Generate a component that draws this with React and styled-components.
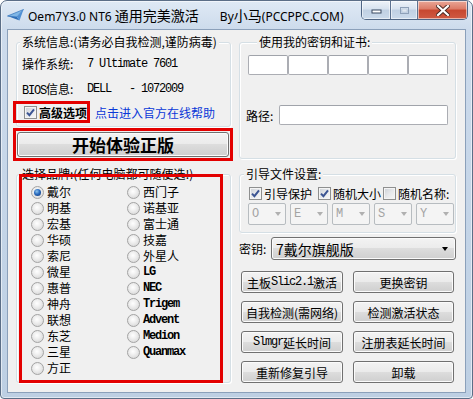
import React from 'react';
import styled, { createGlobalStyle } from 'styled-components';

const GlobalStyle = createGlobalStyle`
  html, body { margin: 0; padding: 0; background: #fff; }
  body {
    font-family: "Noto Sans CJK SC", "Noto Sans", sans-serif;
    font-size: 12px;
    color: #000;
  }
`;

const RED = '#e30000';

const Window = styled.div`
  width: 473px;
  height: 399px;
  box-sizing: border-box;
  display: flex;
  flex-direction: column;
  border: 1px solid #5b6e87;
  border-radius: 7px 7px 4px 4px;
  background: linear-gradient(to bottom, #dfe9f5 0px, #cddbec 28px, #c3d4e7 60%, #bdcfe3 100%);
  box-shadow: inset 0 0 0 1px rgba(255, 255, 255, 0.55);
  overflow: hidden;
`;

const TitleBar = styled.div`
  height: 28px;
  flex: none;
  display: flex;
  align-items: center;
  padding-left: 6px;
  padding-right: 4px;
`;

const Title = styled.div`
  margin-left: 4px;
  font-family: "Noto Sans", "Noto Sans CJK SC", sans-serif;
  font-size: 12px;
  white-space: pre;
  color: #000;
`;

const TitleCjk = styled.span`
  font-family: "Noto Sans CJK SC", sans-serif;
  font-size: 14px;
`;

const TitleBy = styled.span`
  margin-left: 21px;
`;

const CaptionGroup = styled.div`
  margin-left: auto;
  align-self: flex-start;
  display: flex;
  height: 18px;
  border: 1px solid #4f6584;
  border-top: none;
  border-radius: 0 0 5px 5px;
  overflow: hidden;
`;

const CaptionBtn = styled.div`
  width: ${p => p.$w}px;
  height: 100%;
  display: flex;
  align-items: center;
  justify-content: center;
  box-shadow: inset 0 0 0 1px rgba(255, 255, 255, 0.55);
  border-left: ${p => (p.$first ? 'none' : '1px solid #5d7290')};
  background: ${p =>
    p.$close
      ? 'linear-gradient(to bottom, #e9a797 0%, #dc7a66 45%, #c7472f 50%, #cf5a43 100%)'
      : 'linear-gradient(to bottom, #eef3f9 0%, #d7e2ef 45%, #c0d0e3 50%, #cbdaeb 100%)'};
`;

const Client = styled.div`
  margin: 0 6px 5px 6px;
  height: 364px;
  box-sizing: border-box;
  border: 1px solid #8ba0ba;
  background: #f0f0f0;
  display: flex;
`;

const LeftCol = styled.div`
  width: 230px;
  flex: none;
  box-sizing: border-box;
  padding-left: 8px;
`;

const RightCol = styled.div`
  flex: 1;
  padding-left: 1px;
`;

const GroupBox = styled.div`
  position: relative;
  box-sizing: border-box;
  width: ${p => p.$w}px;
  height: ${p => p.$h}px;
  margin-top: ${p => p.$mt}px;
  border: 1px solid #d5dfe5;
  border-radius: 3px;
  box-shadow: inset 1px 1px 0 #fff, 1px 1px 0 #fff;
  padding: ${p => p.$pad || '0'};
`;

const Legend = styled.span`
  position: absolute;
  top: -9px;
  left: ${p => p.$x}px;
  padding: 0 2px;
  line-height: 16px;
  background: #f0f0f0;
  white-space: nowrap;
`;

const InfoRow = styled.div`
  display: flex;
  height: 16px;
  line-height: 16px;
  margin-top: ${p => p.$mt || 0}px;
  white-space: pre;
`;

const InfoLabel = styled.span`
  width: 65px;
  flex: none;
`;

const Mono = styled.span`
  font-family: "Liberation Mono", "DejaVu Sans Mono", monospace;
  font-size: 12px;
  letter-spacing: -1.2px;
  font-weight: ${p => (p.$bold ? 700 : 400)};
  white-space: pre;
`;

const OptionRow = styled.div`
  display: flex;
  align-items: center;
  margin: 4px 0 0 -9px;
`;

const RedFrame = styled.div`
  position: relative;
  z-index: 1;
  box-sizing: border-box;
  border: 3px solid ${RED};
`;

const OptionFrame = styled(RedFrame)`
  width: 77px;
  height: 22px;
  display: flex;
  align-items: center;
  padding-left: 8px;
  gap: 2px;
`;

const BoldLabel = styled.span`
  font-weight: 700;
  font-size: 12px;
  white-space: nowrap;
`;

const HelpLink = styled.span`
  margin-left: 5px;
  color: #0a38d8;
  white-space: nowrap;
`;

const StartFrame = styled(RedFrame)`
  width: 220px;
  height: 33px;
  margin: 1px 0 0 -3px;
  padding: 1px 1px;
`;

const WinButton = styled.div`
  box-sizing: border-box;
  display: flex;
  align-items: center;
  justify-content: center;
  height: ${p => p.$h || 22}px;
  border: 1px solid #707070;
  border-radius: 3px;
  background: linear-gradient(to bottom, #f3f3f3 0%, #ebebeb 48%, #dddddd 50%, #cfcfcf 100%);
  box-shadow: inset 0 0 0 1px #fbfbfb;
  font-size: ${p => p.$fs || 12}px;
  font-weight: ${p => (p.$bold ? 700 : 400)};
  white-space: nowrap;
  color: #000;
`;

const BrandFrame = styled(RedFrame)`
  width: 204px;
  height: 209px;
  margin: -1px 0 0 2px;
  padding: 7px 0 0 9px;
  display: grid;
  grid-template-columns: 96px 1fr;
  grid-template-rows: repeat(12, 16px);
  grid-auto-flow: column;
`;

const RadioItem = styled.div`
  display: flex;
  align-items: center;
  gap: 3px;
  line-height: 16px;
  white-space: nowrap;
`;

const RadioCircle = styled.span`
  position: relative;
  width: 13px;
  height: 13px;
  flex: none;
  box-sizing: border-box;
  border-radius: 50%;
  border: 1px solid #a3a3a3;
  background: radial-gradient(circle at 45% 40%, #ffffff 0%, #eeeeee 40%, #cfcfcf 100%);
  &::after {
    content: '';
    display: ${p => (p.$on ? 'block' : 'none')};
    position: absolute;
    left: 2px;
    top: 2px;
    width: 7px;
    height: 7px;
    border-radius: 50%;
    background: radial-gradient(circle at 40% 35%, #8fc4ec 0%, #2a6cc0 45%, #0e2f6e 100%);
  }
`;

const CheckBoxBox = styled.span`
  width: 13px;
  height: 13px;
  flex: none;
  box-sizing: border-box;
  border: 1px solid #8e8f8f;
  background: linear-gradient(135deg, #cbcfd5 0%, #e6e8eb 50%, #f7f7f7 100%);
  box-shadow: inset 0 0 0 1px #f4f4f4;
  display: flex;
  align-items: center;
  justify-content: center;
`;

const CheckBox = ({ on }) => (
  <CheckBoxBox>
    {on && (
      <svg width="9" height="9" viewBox="0 0 9 9">
        <path d="M1 4.6 L3.4 7.2 L8 1.4" fill="none" stroke="#3c5593" strokeWidth="2" />
      </svg>
    )}
  </CheckBoxBox>
);

const KeyRow = styled.div`
  display: flex;
  margin-left: 2px;
`;

const TextBox = styled.div`
  box-sizing: border-box;
  width: ${p => p.$w}px;
  height: 20px;
  border: 1px solid #abadb3;
  border-top-color: #a0a3aa;
  border-radius: 2px;
  background: #fff;
`;

const PathRow = styled.div`
  display: flex;
  align-items: center;
  margin-top: 30px;
`;

const FieldLabel = styled.span`
  width: ${p => p.$w}px;
  flex: none;
  white-space: nowrap;
`;

const BootChecks = styled.div`
  display: flex;
  align-items: center;
  height: 16px;
`;

const BootCheck = styled.div`
  display: flex;
  align-items: center;
  gap: 2px;
  width: ${p => (p.$w ? `${p.$w}px` : 'auto')};
  flex: none;
  white-space: nowrap;
`;

const ComboRow = styled.div`
  display: flex;
  gap: 4px;
  margin: 2px 0 0 -1px;
`;

const DisabledCombo = styled.div`
  box-sizing: border-box;
  width: 38px;
  height: 22px;
  border: 1px solid #b7bcc0;
  border-radius: 2px;
  background: #f4f4f4;
  display: flex;
  align-items: center;
  justify-content: space-between;
  padding: 0 4px 0 3px;
  color: #a3a3a3;
`;

const Arrow = styled.span`
  width: 0;
  height: 0;
  border-left: 3.5px solid transparent;
  border-right: 3.5px solid transparent;
  border-top: 4px solid ${p => p.$c || '#000'};
`;

const KeyPickRow = styled.div`
  display: flex;
  align-items: center;
  margin-top: 4px;
`;

const KeyCombo = styled(WinButton)`
  width: 185px;
  height: 23px;
  justify-content: space-between;
  padding: 0 7px 0 4px;
  font-size: 14px;
`;

const ButtonGrid = styled.div`
  display: grid;
  grid-template-columns: 102px 101px;
  grid-auto-rows: 22px;
  column-gap: 10px;
  row-gap: 8px;
  margin: 11px 0 0 2px;
`;

const PlaneIcon = () => (
  <svg width="17" height="12" viewBox="0 0 17 12">
    <polygon points="0.5,7 16.5,0.5 10,8" fill="#7fb6e6" stroke="#3f7cc0" strokeWidth="0.8" />
    <polygon points="0.5,7 10,8 12.5,11.5" fill="#2f6fb8" />
    <polygon points="10,8 16.5,0.5 12.5,11.5" fill="#4e8fd4" />
  </svg>
);

const MinIcon = () => (
  <svg width="11" height="8" viewBox="0 0 11 8">
    <rect x="1" y="4" width="9" height="3" fill="#fff" stroke="#3a4a62" strokeWidth="1" />
  </svg>
);

const MaxIcon = () => (
  <svg width="11" height="9" viewBox="0 0 11 9">
    <rect x="1.5" y="1.5" width="8" height="6" fill="none" stroke="#8ea0b8" strokeWidth="1" />
    <rect x="3" y="3" width="5" height="3" fill="#dfe7f1" stroke="#b7c5d6" strokeWidth="0.6" />
  </svg>
);

const CloseIcon = () => (
  <svg width="14" height="11" viewBox="0 0 14 11">
    <path d="M2 1 L12 10 M12 1 L2 10" stroke="#4a2a24" strokeWidth="4" strokeLinecap="square" />
    <path d="M2 1 L12 10 M12 1 L2 10" stroke="#fff" strokeWidth="2.2" strokeLinecap="square" />
  </svg>
);

const leftBrands = ['戴尔', '明基', '宏基', '华硕', '索尼', '微星', '惠普', '神舟', '联想', '东芝', '三星', '方正'];
const rightBrands = ['西门子', '诺基亚', '富士通', '技嘉', '外星人', 'LG', 'NEC', 'Trigem', 'Advent', 'Medion', 'Quanmax'];

const isLatin = s => /^[A-Za-z]+$/.test(s);

const buttons = [
  <>主板<Mono>Slic2.1</Mono>激活</>,
  <>更换密钥</>,
  <>自我检测(需网络)</>,
  <>检测激活状态</>,
  <><Mono>Slmgr</Mono>延长时间</>,
  <>注册表延长时间</>,
  <>重新修复引导</>,
  <>卸载</>,
];

export default function App() {
  return (
    <>
      <GlobalStyle />
      <Window>
        <TitleBar>
          <PlaneIcon />
          <Title>
            Oem7Y3.0 NT6 <TitleCjk>通用完美激活</TitleCjk>
            <TitleBy>By<TitleCjk>小马</TitleCjk>(PCCPPC.COM)</TitleBy>
          </Title>
          <CaptionGroup>
            <CaptionBtn $w={28} $first><MinIcon /></CaptionBtn>
            <CaptionBtn $w={26}><MaxIcon /></CaptionBtn>
            <CaptionBtn $w={49} $close><CloseIcon /></CaptionBtn>
          </CaptionGroup>
        </TitleBar>

        <Client>
          <LeftCol>
            <GroupBox $w={215} $h={85} $mt={12} $pad="13px 0 0 5px">
              <Legend $x={3}>系统信息:(请务必自我检测,谨防病毒)</Legend>
              <InfoRow>
                <InfoLabel>操作系统:</InfoLabel>
                <Mono>7 Ultimate 7601</Mono>
              </InfoRow>
              <InfoRow $mt={9}>
                <InfoLabel><Mono>BIOS</Mono>信息:</InfoLabel>
                <Mono>DELL   - 1072009</Mono>
              </InfoRow>
              <OptionRow>
                <OptionFrame>
                  <CheckBox on />
                  <BoldLabel>高级选项</BoldLabel>
                </OptionFrame>
                <HelpLink>点击进入官方在线帮助</HelpLink>
              </OptionRow>
            </GroupBox>

            <StartFrame>
              <WinButton $h={25} $fs={17} $bold>开始体验正版</WinButton>
            </StartFrame>

            <GroupBox $w={215} $h={209} $mt={13}>
              <Legend $x={3}>选择品牌:(任何电脑都可随便选!)</Legend>
              <BrandFrame>
                {leftBrands.map((b, i) => (
                  <RadioItem key={b}>
                    <RadioCircle $on={i === 0} />
                    {b}
                  </RadioItem>
                ))}
                {rightBrands.map(b => (
                  <RadioItem key={b}>
                    <RadioCircle />
                    {isLatin(b) ? <Mono $bold>{b}</Mono> : b}
                  </RadioItem>
                ))}
              </BrandFrame>
            </GroupBox>
          </LeftCol>

          <RightCol>
            <GroupBox $w={217} $h={117} $mt={12} $pad="12px 0 0 6px">
              <Legend $x={17}>使用我的密钥和证书:</Legend>
              <KeyRow>
                {[0, 1, 2, 3, 4].map(i => (
                  <TextBox key={i} $w={40} />
                ))}
              </KeyRow>
              <PathRow>
                <FieldLabel $w={33}>路径:</FieldLabel>
                <TextBox $w={169} />
              </PathRow>
            </GroupBox>

            <GroupBox $w={217} $h={59} $mt={15} $pad="10px 0 0 9px">
              <Legend $x={4}>引导文件设置:</Legend>
              <BootChecks>
                <BootCheck $w={69}><CheckBox on />引导保护</BootCheck>
                <BootCheck $w={65}><CheckBox on />随机大小</BootCheck>
                <BootCheck><CheckBox />随机名称:</BootCheck>
              </BootChecks>
              <ComboRow>
                {['O', 'E', 'M', 'S', 'Y'].map(l => (
                  <DisabledCombo key={l}>
                    <Mono>{l}</Mono>
                    <Arrow $c="#b0b0b0" />
                  </DisabledCombo>
                ))}
              </ComboRow>
            </GroupBox>

            <KeyPickRow>
              <FieldLabel $w={32}>密钥:</FieldLabel>
              <KeyCombo>
                <span>7戴尔旗舰版</span>
                <Arrow />
              </KeyCombo>
            </KeyPickRow>

            <ButtonGrid>
              {buttons.map((b, i) => (
                <WinButton key={i}>{b}</WinButton>
              ))}
            </ButtonGrid>
          </RightCol>
        </Client>
      </Window>
    </>
  );
}
